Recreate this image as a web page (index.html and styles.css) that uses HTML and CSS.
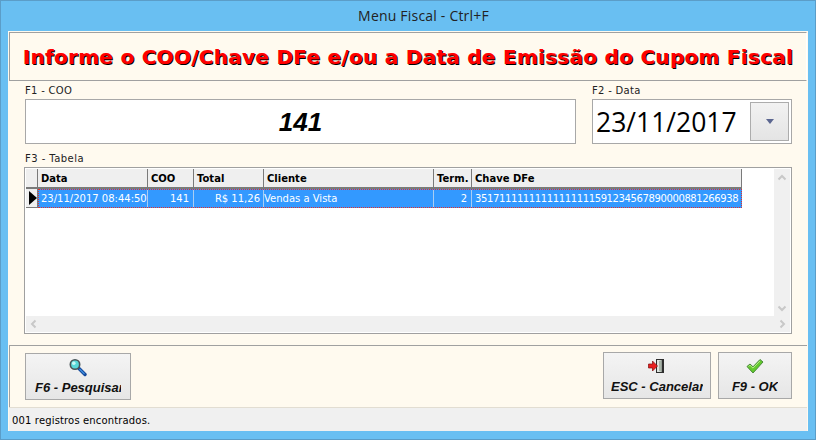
FILE: index.html
```html
<!DOCTYPE html>
<html lang="pt-BR">
<head>
  <meta charset="UTF-8" />
  <title>Menu Fiscal - Ctrl+F</title>
  <link rel="stylesheet" href="styles.css">
</head>
<body>
  <div class="window">
    <div class="titlebar">Menu Fiscal - Ctrl+F</div>
    <div class="client">
      <div class="banner"><h1>Informe o COO/Chave DFe e/ou a Data de Emissão do Cupom Fiscal</h1></div>

      <div class="fields">
        <div class="field-coo">
          <label class="caption">F1 - COO</label>
          <div class="coo-box">141</div>
        </div>
        <div class="field-date">
          <label class="caption">F2 - Data</label>
          <div class="date-box">
            <span class="date-value">23/11/2017</span>
            <div class="date-btn"><span class="date-arrow"></span></div>
          </div>
        </div>
      </div>

      <label class="caption caption-grid">F3 - Tabela</label>
      <div class="grid">
        <div class="grid-main">
          <div class="grid-area">
            <div class="row row-head">
              <div class="cell c-ind"></div>
              <div class="cell c-data">Data</div>
              <div class="cell c-coo">COO</div>
              <div class="cell c-total">Total</div>
              <div class="cell c-cli">Cliente</div>
              <div class="cell c-term">Term.</div>
              <div class="cell c-key">Chave DFe</div>
            </div>
            <div class="row row-sel">
              <div class="cell c-ind"><span class="pointer"></span></div>
              <div class="sel-cells">
                <div class="cell c-data">23/11/2017 08:44:50</div>
                <div class="cell c-coo num">141</div>
                <div class="cell c-total num">R$ 11,26</div>
                <div class="cell c-cli">Vendas a Vista</div>
                <div class="cell c-term num">2</div>
                <div class="cell c-key">35171111111111111111591234567890000881266938</div>
              </div>
            </div>
          </div>
          <div class="vscroll">
            <svg width="16" height="16" viewBox="0 0 16 16"><path d="M4.500 9.500 8 6l3.500 3.500" fill="none" stroke="#c8c8c8" stroke-width="2"/></svg>
            <svg width="16" height="16" viewBox="0 0 16 16"><path d="M4.500 6.500 8 10l3.500-3.500" fill="none" stroke="#c8c8c8" stroke-width="2"/></svg>
          </div>
        </div>
        <div class="hscroll">
          <svg width="16" height="16" viewBox="0 0 16 16"><path d="M9.500 4.500 6 8l3.500 3.500" fill="none" stroke="#c8c8c8" stroke-width="2"/></svg>
          <svg width="16" height="16" viewBox="0 0 16 16"><path d="M6.500 4.500 10 8l-3.500 3.500" fill="none" stroke="#c8c8c8" stroke-width="2"/></svg>
        </div>
      </div>

      <div class="footer">
        <button class="btn btn-search">
          <svg width="18" height="18" viewBox="0 0 18 18">
            <path d="M10 9.500 16 15.500" stroke="#14489a" stroke-width="3.400" stroke-linecap="round"/>
            <path d="M10.500 10 15.500 15" stroke="#3f8fe0" stroke-width="1.200"/>
            <circle cx="6" cy="5.500" r="4.700" fill="#58d8d8" stroke="#4a5558" stroke-width="1.600"/>
            <circle cx="4.800" cy="4.300" r="1.800" fill="#c8f8f6"/>
          </svg>
          <span class="btn-text">F6 - Pesquisar</span>
        </button>
        <div class="footer-right">
          <button class="btn btn-cancel">
            <svg width="18" height="18" viewBox="0 0 18 18">
              <path d="M8 1h8v14H8z" fill="#2e2e2e"/>
              <path d="M9 2h4.500v12H9z" fill="#dfe4df"/>
              <path d="M11 3l2.500-1v12L11 13z" fill="#a8b4a8"/>
              <path d="M0.500 6h4V3l5 5-5 5v-3h-4z" fill="#e82020" stroke="#7c1010" stroke-width=".7"/>
            </svg>
            <span class="btn-text">ESC - Cancelar</span>
          </button>
          <button class="btn btn-ok">
            <svg width="18" height="18" viewBox="0 0 18 18">
              <path d="M1 8.500 4 6l3 2.800L14 1.500l3 2.500L7 15z" fill="#62c92c" stroke="#4a8a3c" stroke-width="1"/>
              <path d="M2.500 8.500 4 7.200l3 2.900 7-7.200" fill="none" stroke="#b4ec84" stroke-width="1"/>
            </svg>
            <span class="btn-text">F9 - OK</span>
          </button>
        </div>
      </div>

      <div class="status">001 registros encontrados.</div>
    </div>
  </div>
</body>
</html>
```

FILE: styles.css
```css
* {
  box-sizing: border-box;
}

body {
  margin: 0;
  font-family: 'DejaVu Sans', Verdana, sans-serif;
  font-size: 10px;
  color: #000;
}

.window {
  width: 816px;
  height: 440px;
  background: #69bff2;
  border: 1px solid #5b9dc8;
  padding: 0 7px;
}

.titlebar {
  height: 30px;
  line-height: 30px;
  padding-left: 31px;
  text-align: center;
  font-family: 'Open Sans', sans-serif;
  font-size: 14px;
  letter-spacing: 0.2px;
  color: #222;
}

.client {
  width: 800px;
  height: 400px;
  background: #fffaef;
  display: flex;
  flex-direction: column;
  padding-top: 1px;
}

.banner {
  height: 49px;
  margin: 0 1px;
  border: 1px solid #a0a0a0;
  border-right-color: #fff;
  display: flex;
  align-items: center;
  justify-content: center;
}

.banner h1 {
  margin: 0;
  font-size: 20px;
  font-weight: bold;
  letter-spacing: 0.28px;
  color: #ff0000;
  text-shadow: 1px 1px 0 #000;
  white-space: nowrap;
}

.fields {
  display: flex;
  gap: 16px;
  padding: 2px 16px 0 17px;
}

.field-coo {
  flex: 1;
}

.field-date {
  width: 200px;
}

.caption {
  display: block;
  height: 16px;
  line-height: 15px;
  font-size: 10px;
  letter-spacing: 0.3px;
  color: #222;
}

.caption-grid {
  margin: 7px 0 0 17px;
  letter-spacing: 0.45px;
}

.coo-box {
  height: 45px;
  background: #fff;
  border: 1px solid #a8a8a8;
  text-align: center;
  line-height: 44px;
  font-family: 'Liberation Sans', Arial, sans-serif;
  font-size: 26px;
  font-weight: bold;
  font-style: italic;
}

.date-box {
  height: 45px;
  background: #fff;
  border: 1px solid #a8a8a8;
  display: flex;
  align-items: center;
  justify-content: space-between;
  padding: 0 2px 0 3px;
}

.date-value {
  font-family: 'Open Sans', sans-serif;
  font-size: 26.5px;
  padding-top: 1px;
}

.date-btn {
  width: 39px;
  height: 39px;
  background: linear-gradient(#f2f2f2, #e4e4e4);
  border: 1px solid #acacac;
  display: flex;
  align-items: center;
  justify-content: center;
}

.date-arrow {
  border-top: 5px solid #5b6690;
  border-left: 4px solid transparent;
  border-right: 4px solid transparent;
}

.grid {
  height: 167px;
  margin: 0 16px;
  background: #fff;
  border: 1px solid #a0a0a0;
  padding: 1px;
  display: flex;
  flex-direction: column;
}

.grid-main {
  flex: 1;
  display: flex;
  min-height: 0;
}

.grid-area {
  flex: 1;
}

.row {
  display: flex;
}

.row-head {
  height: 20px;
}

.row-head .cell {
  background: #efefef;
  border-right: 1px solid #7a7a7a;
  border-bottom: 2px solid #7a7a7a;
  font-weight: bold;
  line-height: 20px;
}

.row-sel {
  height: 20px;
}

.sel-cells {
  display: flex;
  background: #3399ff;
  outline: 1px dotted #e03030;
  outline-offset: -1px;
  height: 19px;
}

.sel-cells .cell {
  color: #fff;
  border-right: 1px solid #a9cdf2;
  line-height: 20px;
}

.sel-cells .cell:last-child {
  border-right: 0;
}

.cell {
  padding: 0 2px 0 3px;
  overflow: hidden;
  white-space: nowrap;
}

.sel-cells .num {
  text-align: right;
  padding-right: 4px;
}

.sel-cells .c-total {
  padding-right: 3px;
}

.sel-cells .c-cli {
  padding-left: 0;
}

.c-ind { width: 12px; padding: 0; }
.c-data { width: 110px; }
.c-coo { width: 46px; }
.c-total { width: 70px; }
.c-cli { width: 170px; }
.c-term { width: 38px; }
.c-key { width: 270px; }

.sel-cells .c-key {
  letter-spacing: -0.38px;
}

.row-sel .c-ind {
  background: #efefef;
  border-right: 1px solid #7a7a7a;
  border-bottom: 1px solid #7a7a7a;
  height: 19px;
  display: flex;
  align-items: center;
  padding-left: 3px;
}

.pointer {
  border-left: 8px solid #000;
  border-top: 7px solid transparent;
  border-bottom: 7px solid transparent;
}

.vscroll {
  width: 16px;
  background: #f0f0f0;
  display: flex;
  flex-direction: column;
  justify-content: space-between;
  padding-top: 1px;
}

.hscroll {
  height: 16px;
  background: #f0f0f0;
  display: flex;
  justify-content: space-between;
}

.footer {
  margin: 11px 1px 0;
  height: 62px;
  border-top: 1px solid #a0a0a0;
  border-left: 1px solid #a0a0a0;
  display: flex;
  justify-content: space-between;
  align-items: flex-start;
  padding: 6px 15px 0 15px;
}

.footer-right {
  display: flex;
  gap: 7px;
}

.btn {
  height: 47px;
  background: linear-gradient(#f4f4f4, #e6e6e6);
  border: 1px solid #a8a8a8;
  display: flex;
  flex-direction: column;
  align-items: center;
  padding: 5px 0 0;
  font-family: inherit;
  overflow: hidden;
}

.btn svg {
  flex: none;
}

.btn-search {
  width: 106px;
  margin-top: 1px;
}

.btn-cancel {
  width: 108px;
}

.btn-ok {
  width: 74px;
}

.btn-text {
  display: block;
  margin-top: 3px;
  font-family: 'Liberation Sans', Arial, sans-serif;
  font-size: 13px;
  line-height: 16px;
  font-weight: bold;
  font-style: italic;
  white-space: nowrap;
  overflow: hidden;
  color: #111;
}

.btn-search .btn-text {
  width: 86px;
}

.btn-cancel .btn-text {
  width: 92px;
}

.status {
  height: 24px;
  background: #f0f0f0;
  border-top: 1px solid #e2ddd2;
  margin: 0 1px;
  padding-left: 3px;
  line-height: 25px;
  font-size: 10px;
  letter-spacing: 0.15px;
}
```
